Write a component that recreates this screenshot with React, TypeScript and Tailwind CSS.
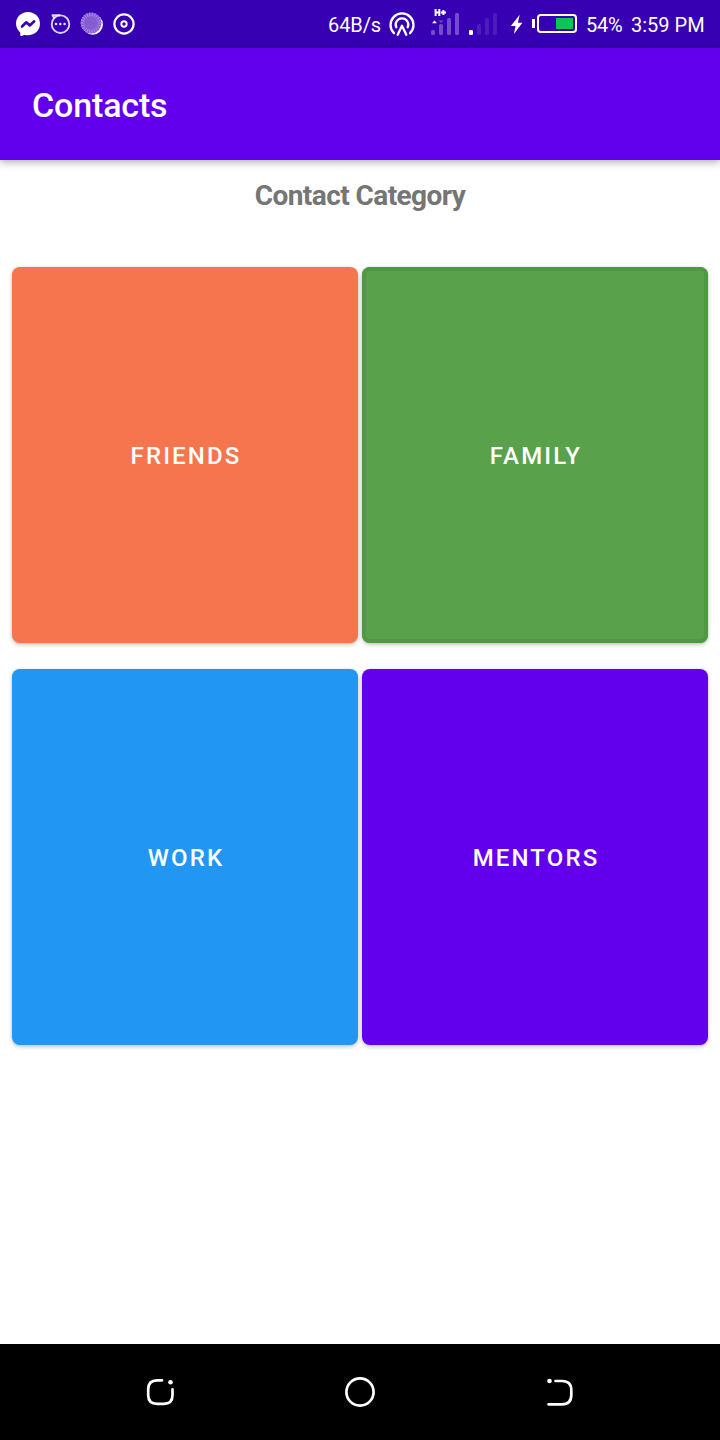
import React from "react";

const spokes = Array.from({ length: 22 }, (_, i) => (i * Math.PI) / 11);

function StatusBar() {
  return (
    <div className="flex h-12 items-center bg-[#3700b3] text-[20px] leading-[24px] text-white">
      <svg className="ml-[14px] h-12 w-[28px]" viewBox="14 0 28 48">
        <path
          d="M28 12C21.2 12 16 17 16 23.6c0 3.5 1.5 6.5 3.9 8.6.2.2.3.4.3.7l.1 2.2c0 .7.7 1.1 1.4.9l2.4-1.1h.7c1 .3 2.1.4 3.2.4 6.8 0 12-4.9 12-11.7C40 17 34.800 12 28 12Z"
          fill="#fff"
        />
        <path d="m22 26.500 4.300-4.200 3.500 3.200 4.400-4.200" fill="none" stroke="#3700b3" strokeWidth="2.600" strokeLinejoin="round" strokeLinecap="round" />
      </svg>
      <svg className="ml-[6px] h-12 w-[26px]" viewBox="48 0 26 48">
        <g fill="none" stroke="#fff" strokeOpacity=".82" strokeWidth="1.900" strokeLinejoin="round">
          <circle cx="60.500" cy="24.200" r="8.800" />
          <path d="M60 15.200h-7.500l1.800 3.100" />
        </g>
        <g fill="#fff" fillOpacity=".88">
          <circle cx="56" cy="24" r="1.300" />
          <circle cx="60.300" cy="24" r="1.300" />
          <circle cx="64.600" cy="24" r="1.300" />
        </g>
      </svg>
      <svg className="ml-[4px] h-12 w-[28px]" viewBox="78 0 28 48">
        <circle cx="92.700" cy="24.500" r="10.200" fill="#fff" />
        <circle cx="91" cy="23" r="10.500" fill="#875bd4" />
        <g stroke="#ad91e1" strokeWidth="1">
          {spokes.map((a) => (
            <line
              key={a}
              x1={91 + 6.8 * Math.cos(a)}
              y1={23 + 6.8 * Math.sin(a)}
              x2={91 + 10.5 * Math.cos(a)}
              y2={23 + 10.5 * Math.sin(a)}
            />
          ))}
        </g>
      </svg>
      <svg className="ml-[4px] h-12 w-[28px]" viewBox="110 0 28 48">
        <circle cx="124" cy="24" r="9.600" fill="none" stroke="#fff" strokeWidth="2.200" />
        <circle cx="124" cy="24" r="2.700" fill="none" stroke="#fff" strokeWidth="1.900" />
      </svg>

      <span className="ml-auto mt-[2px] w-[59px] whitespace-nowrap tracking-[-0.1px]">64B/s</span>
      <svg className="h-12 w-[30px]" viewBox="387 0 30 48">
        <g fill="none" stroke="#fff" strokeWidth="2.300" strokeLinecap="round" strokeLinejoin="round">
          <path d="M394 33.200a11.500 11.500 0 1 1 16 0" />
          <path d="M396.300 27.300a6.300 6.300 0 1 1 11.400 0" />
          <path d="m397.700 34.700 4.300-9 4.300 9" />
        </g>
      </svg>
      <svg className="ml-[11px] h-12 w-[34px]" viewBox="428 0 34 48">
        <g fill="#fff" fillOpacity=".3">
          <rect x="431" y="30" width="4" height="5" rx="1.500" />
          <rect x="439" y="24" width="4" height="11" rx="1.500" />
          <rect x="447" y="18" width="4" height="17" rx="1.500" />
          <rect x="455" y="13" width="4" height="22" rx="1.500" />
          <path d="M438.500 20.500h5l-2.500 2.500z" />
        </g>
        <path d="M432 23.200h5l-2.500-2.700z" fill="#fff" />
        <path d="M435.600 9v7M439.300 9v7M435.600 12.500h3.700M440.800 12.500h5.200M443.400 10v5" fill="none" stroke="#fff" strokeWidth="2" />
      </svg>
      <svg className="ml-[5px] h-12 w-[33px]" viewBox="467 0 33 48">
        <rect x="469" y="30" width="4" height="5" rx="1.300" fill="#fff" />
        <g fill="#fff" fillOpacity=".11">
          <rect x="477" y="24" width="4" height="11" rx="1.500" />
          <rect x="485" y="18" width="4" height="17" rx="1.500" />
          <rect x="493" y="13" width="4" height="22" rx="1.500" />
        </g>
      </svg>
      <svg className="ml-[8px] h-12 w-[18px]" viewBox="508 0 18 48">
        <path d="m519.700 14.700-8.900 11.200h4.700l-1.600 8.100 8.500-11.200h-4.500z" fill="#fff" />
      </svg>
      <svg className="ml-[4px] h-12 w-[50px]" viewBox="530 0 50 48">
        <rect x="532" y="19" width="3" height="9" fill="#fff" />
        <rect x="538" y="15" width="38" height="17" rx="2.800" fill="none" stroke="#fff" strokeWidth="2" />
        <rect x="556" y="18" width="17" height="11" fill="#0dc557" />
      </svg>
      <span className="ml-[6px] mt-[2px] w-[45px] tracking-[-0.2px]">54%</span>
      <span className="mt-[2px] w-[89px] whitespace-nowrap">3:59 PM</span>
    </div>
  );
}

const tile =
  "flex h-[376px] items-center justify-center rounded-[8px] pl-[2px] pt-[2px] text-[24px] font-medium leading-[28px] tracking-[2.140px] text-white shadow-[0_2px_4px_rgba(0,0,0,0.2),0_0_3px_rgba(0,0,0,0.11)]";

export default function App() {
  return (
    <div className="flex h-[1440px] w-[720px] flex-col bg-white font-['Roboto',sans-serif]">
      <StatusBar />
      <header className="flex h-28 items-center bg-[#6200ee] pl-8 pt-[2px] text-[34px] font-medium tracking-[-0.150px] text-white shadow-[0_2px_8px_rgba(0,0,0,0.34)]">
        Contacts
      </header>
      <main className="flex-1 px-3 pt-[19px]">
        <h1 className="text-center text-[28px] font-bold leading-[34px] tracking-[-0.570px] text-[#757575]">Contact Category</h1>
        <div className="mt-[54px] grid grid-cols-2 gap-x-1 gap-y-[26px]">
          <button className={`${tile} bg-[#f6744e]`}>FRIENDS</button>
          <button className={`${tile} bg-[#59a14b] inset-ring-4 inset-ring-[#509943]`}>FAMILY</button>
          <button className={`${tile} bg-[#2196f3]`}>WORK</button>
          <button className={`${tile} bg-[#6200ee]`}>MENTORS</button>
        </div>
      </main>
      <nav className="flex h-24 items-center justify-between bg-black px-[140px]">
        <svg className="h-10 w-10" viewBox="140 1372 40 40" fill="none" stroke="#fff" strokeWidth="2.700" strokeLinecap="round">
          <path d="M162 1380.300h-5q-8.800 0-8.800 9v6q0 8.500 9 8.500h6.500q8.800 0 8.800-8.500v-6" />
          <circle cx="170.500" cy="1382.300" r="2.300" fill="#fff" stroke="none" />
        </svg>
        <svg className="h-10 w-10" viewBox="340 1372 40 40" fill="none" stroke="#fff" strokeWidth="2.700">
          <circle cx="360" cy="1392" r="13.600" />
        </svg>
        <svg className="h-10 w-10" viewBox="540 1372 40 40" fill="none" stroke="#fff" strokeWidth="2.700" strokeLinecap="round">
          <path d="M555.500 1381h6.500q9.300 0 9.300 9v5q0 9.300-9.300 9.300h-13.500" />
          <circle cx="549.500" cy="1381" r="2.300" fill="#fff" stroke="none" />
        </svg>
      </nav>
    </div>
  );
}
